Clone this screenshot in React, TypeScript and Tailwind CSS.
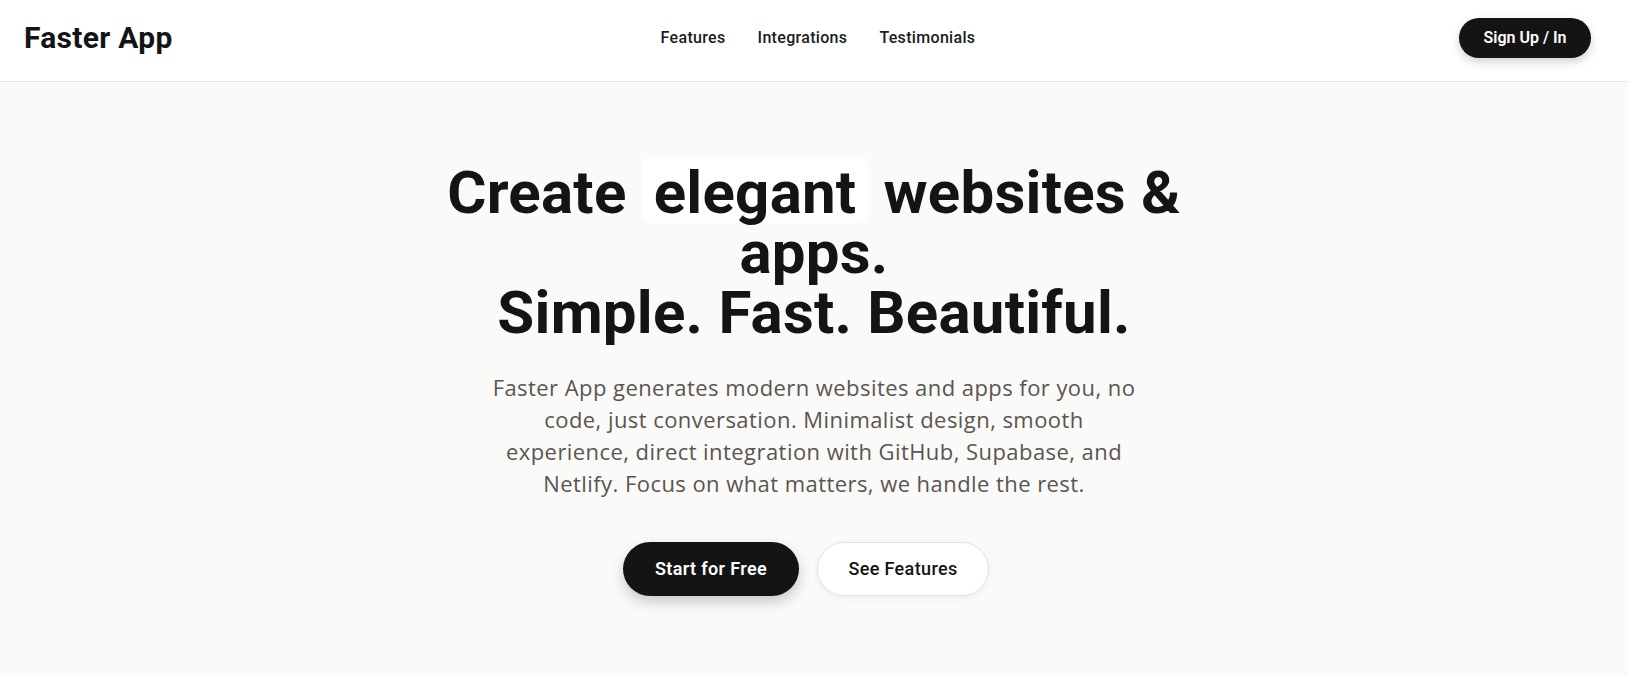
const navLinks = ['Features', 'Integrations', 'Testimonials'];

function Header() {
  return (
    <header className="grid h-[82px] grid-cols-3 items-center border-b border-[#e7e7e5] bg-white pb-[6px] pl-6 pr-[37px]">
      <a href="#" className="text-[30px] font-bold leading-9 tracking-[0.01em] text-[#141414]">
        Faster App
      </a>
      <nav className="flex justify-center gap-8 pl-[21px] text-base font-medium leading-6 tracking-[0.02em] text-[#1c1c1c]">
        {navLinks.map((link) => (
          <a key={link} href={`#${link.toLowerCase()}`}>
            {link}
          </a>
        ))}
      </nav>
      <div className="flex justify-end">
        <button className="h-10 w-[132px] rounded-full bg-[#141414] text-base font-semibold text-white shadow-[0_4px_10px_rgba(0,0,0,0.18)]">
          Sign Up / In
        </button>
      </div>
    </header>
  );
}

function Hero() {
  return (
    <section className="flex flex-col items-center pt-[75px] text-center">
      <h1 className="text-6xl font-bold leading-none tracking-[0.004em] text-[#141414]">
        Create{' '}
        <span className="inline-block rounded-lg bg-white px-3 pt-[6px] leading-none">elegant</span>{' '}
        websites &amp;
        <br />
        apps.
        <br />
        Simple. Fast. Beautiful.
      </h1>
      <p
        className="mt-7 text-[22px] leading-8 tracking-[0.02em] text-[#5a5550]"
        style={{ fontFamily: '"Open Sans", sans-serif' }}
      >
        Faster App generates modern websites and apps for you, no
        <br />
        code, just conversation. Minimalist design, smooth
        <br />
        experience, direct integration with GitHub, Supabase, and
        <br />
        Netlify. Focus on what matters, we handle the rest.
      </p>
      <div className="mr-4 mt-[43px] flex gap-[18px]">
        <button className="h-[54px] w-[176px] rounded-full bg-[#141414] text-lg font-semibold tracking-[0.02em] text-white shadow-[0_6px_14px_rgba(0,0,0,0.2)]">
          Start for Free
        </button>
        <button className="h-[54px] w-[172px] rounded-full border border-[#e5e4e2] bg-white text-lg font-medium tracking-[0.02em] text-[#141414] shadow-[0_2px_6px_rgba(0,0,0,0.06)]">
          See Features
        </button>
      </div>
    </section>
  );
}

export default function App() {
  return (
    <div className="min-h-screen bg-[#fafaf9]" style={{ fontFamily: 'Roboto, "Noto Sans", sans-serif' }}>
      <Header />
      <Hero />
    </div>
  );
}
